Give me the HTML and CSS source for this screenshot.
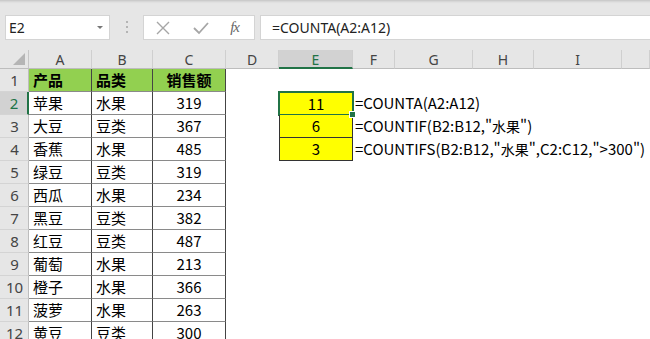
FILE: index.html
```html
<!DOCTYPE html>
<html lang="zh-CN">
<head>
    <meta charset="UTF-8">
    <title>COUNTA COUNTIF COUNTIFS</title>
    <link rel="stylesheet" href="styles.css">
</head>
<body>
    <div class="formula-bar">
        <div class="name-box">
            <span>E2</span>
            <span class="caret"></span>
        </div>
        <div class="grip">
            <span></span><span></span><span></span>
        </div>
        <div class="fx-box">
            <svg width="16" height="16" viewBox="0 0 16 16"><path d="M2 2 L14 14 M14 2 L2 14" stroke="#a6a6a6" stroke-width="1.4" fill="none"/></svg>
            <svg width="18" height="16" viewBox="0 0 18 16"><path d="M2 8 L7 13 L16 3" stroke="#a6a6a6" stroke-width="1.8" fill="none"/></svg>
            <span class="fx">fx</span>
        </div>
        <div class="formula-input">=COUNTA(A2:A12)</div>
    </div>

    <div class="sheet">
        <!-- column headers -->
        <div class="corner"><span class="corner-tri"></span></div>
        <div class="col-head">A</div>
        <div class="col-head">B</div>
        <div class="col-head">C</div>
        <div class="col-head">D</div>
        <div class="col-head col-active">E</div>
        <div class="col-head">F</div>
        <div class="col-head">G</div>
        <div class="col-head">H</div>
        <div class="col-head">I</div>
        <div class="col-head"></div>

        <!-- row 1 -->
        <div class="row-head">1</div>
        <div class="cell tbl title">产品</div>
        <div class="cell tbl title">品类</div>
        <div class="cell tbl title num">销售额</div>
        <div class="cell"></div><div class="cell"></div><div class="cell"></div>
        <div class="cell"></div><div class="cell"></div><div class="cell"></div><div class="cell"></div>

        <!-- row 2 -->
        <div class="row-head row-active">2</div>
        <div class="cell tbl">苹果</div>
        <div class="cell tbl">水果</div>
        <div class="cell tbl num">319</div>
        <div class="cell"></div>
        <div class="cell result result-top selected">11</div>
        <div class="cell formula">=COUNTA(A2:A12)</div>
        <div class="cell"></div><div class="cell"></div><div class="cell"></div><div class="cell"></div>

        <!-- row 3 -->
        <div class="row-head">3</div>
        <div class="cell tbl">大豆</div>
        <div class="cell tbl">豆类</div>
        <div class="cell tbl num">367</div>
        <div class="cell"></div>
        <div class="cell result">6</div>
        <div class="cell formula">=COUNTIF(B2:B12,"<span class="cjk">水果</span>")</div>
        <div class="cell"></div><div class="cell"></div><div class="cell"></div><div class="cell"></div>

        <!-- row 4 -->
        <div class="row-head">4</div>
        <div class="cell tbl">香蕉</div>
        <div class="cell tbl">水果</div>
        <div class="cell tbl num">485</div>
        <div class="cell"></div>
        <div class="cell result">3</div>
        <div class="cell formula">=COUNTIFS(B2:B12,"<span class="cjk">水果</span>",C2:C12,"&gt;300")</div>
        <div class="cell"></div><div class="cell"></div><div class="cell"></div><div class="cell"></div>

        <!-- row 5 -->
        <div class="row-head">5</div>
        <div class="cell tbl">绿豆</div>
        <div class="cell tbl">豆类</div>
        <div class="cell tbl num">319</div>
        <div class="cell"></div><div class="cell"></div><div class="cell"></div>
        <div class="cell"></div><div class="cell"></div><div class="cell"></div><div class="cell"></div>

        <!-- row 6 -->
        <div class="row-head">6</div>
        <div class="cell tbl">西瓜</div>
        <div class="cell tbl">水果</div>
        <div class="cell tbl num">234</div>
        <div class="cell"></div><div class="cell"></div><div class="cell"></div>
        <div class="cell"></div><div class="cell"></div><div class="cell"></div><div class="cell"></div>

        <!-- row 7 -->
        <div class="row-head">7</div>
        <div class="cell tbl">黑豆</div>
        <div class="cell tbl">豆类</div>
        <div class="cell tbl num">382</div>
        <div class="cell"></div><div class="cell"></div><div class="cell"></div>
        <div class="cell"></div><div class="cell"></div><div class="cell"></div><div class="cell"></div>

        <!-- row 8 -->
        <div class="row-head">8</div>
        <div class="cell tbl">红豆</div>
        <div class="cell tbl">豆类</div>
        <div class="cell tbl num">487</div>
        <div class="cell"></div><div class="cell"></div><div class="cell"></div>
        <div class="cell"></div><div class="cell"></div><div class="cell"></div><div class="cell"></div>

        <!-- row 9 -->
        <div class="row-head">9</div>
        <div class="cell tbl">葡萄</div>
        <div class="cell tbl">水果</div>
        <div class="cell tbl num">213</div>
        <div class="cell"></div><div class="cell"></div><div class="cell"></div>
        <div class="cell"></div><div class="cell"></div><div class="cell"></div><div class="cell"></div>

        <!-- row 10 -->
        <div class="row-head">10</div>
        <div class="cell tbl">橙子</div>
        <div class="cell tbl">水果</div>
        <div class="cell tbl num">366</div>
        <div class="cell"></div><div class="cell"></div><div class="cell"></div>
        <div class="cell"></div><div class="cell"></div><div class="cell"></div><div class="cell"></div>

        <!-- row 11 -->
        <div class="row-head">11</div>
        <div class="cell tbl">菠萝</div>
        <div class="cell tbl">水果</div>
        <div class="cell tbl num">263</div>
        <div class="cell"></div><div class="cell"></div><div class="cell"></div>
        <div class="cell"></div><div class="cell"></div><div class="cell"></div><div class="cell"></div>

        <!-- row 12 -->
        <div class="row-head">12</div>
        <div class="cell tbl">黄豆</div>
        <div class="cell tbl">豆类</div>
        <div class="cell tbl num">300</div>
        <div class="cell"></div><div class="cell"></div><div class="cell"></div>
        <div class="cell"></div><div class="cell"></div><div class="cell"></div><div class="cell"></div>
    </div>
</body>
</html>
```

FILE: styles.css
```css
body {
    margin: 0;
    padding: 0;
    background-color: #ffffff;
    font-family: "Noto Sans CJK SC", "Noto Sans", sans-serif;
    color: #000;
    overflow: hidden;
}

/* formula bar */

.formula-bar {
    display: flex;
    align-items: flex-start;
    height: 50px;
    padding: 15px 0 0 5px;
    box-sizing: border-box;
    background-color: #e6e6e6;
    box-shadow: inset 0 4px 3px -3px rgba(0, 0, 0, 0.18);
}

.name-box {
    display: flex;
    align-items: center;
    justify-content: space-between;
    width: 105px;
    height: 25px;
    box-sizing: border-box;
    padding: 0 6px 0 3px;
    background-color: #fff;
    border: 1px solid #d4d4d4;
    font-family: "Noto Sans", sans-serif;
    font-size: 14px;
    color: #222;
}

.caret {
    width: 0;
    height: 0;
    border-left: 3px solid transparent;
    border-right: 3px solid transparent;
    border-top: 3px solid #777;
}

.grip {
    display: flex;
    flex-direction: column;
    gap: 3px;
    width: 33px;
    padding-top: 6px;
    align-items: center;
}

.grip span {
    width: 2px;
    height: 2px;
    background-color: #b4b4b4;
}

.fx-box {
    display: flex;
    align-items: center;
    justify-content: space-between;
    width: 112px;
    height: 25px;
    box-sizing: border-box;
    padding: 0 15px 0 11px;
    background-color: #fff;
    border: 1px solid #d4d4d4;
    margin-right: 5px;
}

.fx {
    font-family: "Liberation Serif", serif;
    font-style: italic;
    font-size: 15px;
    color: #666;
    letter-spacing: -1px;
}

.formula-input {
    flex: 1;
    height: 25px;
    box-sizing: border-box;
    padding: 0 0 0 11px;
    background-color: #fff;
    border: 1px solid #d4d4d4;
    border-right: none;
    font-family: "Noto Sans", sans-serif;
    font-size: 14px;
    line-height: 23px;
    color: #222;
}

/* sheet grid */

.sheet {
    display: grid;
    grid-template-columns: 29px 63px 61px 73px 53px 74px 42px 78px 61px 88px 28px;
    grid-template-rows: 19px repeat(12, 23px);
}

.corner,
.col-head,
.row-head {
    background-color: #e6e6e6;
    box-sizing: border-box;
    font-family: "Noto Sans", sans-serif;
    font-size: 14px;
    color: #444;
    display: flex;
    align-items: center;
    justify-content: center;
}

.corner {
    position: relative;
    border-right: 1px solid #c6c6c6;
    border-bottom: 1px solid #bdbdbd;
}

.corner-tri {
    position: absolute;
    right: 3px;
    bottom: 3px;
    width: 0;
    height: 0;
    border-left: 12px solid transparent;
    border-bottom: 12px solid #b5b5b5;
}

.col-head {
    border-right: 1px solid #cfcfcf;
    border-bottom: 1px solid #bdbdbd;
    padding-top: 1px;
}

.col-active {
    background-color: #d2d2d2;
    border-bottom: 2px solid #217346;
    color: #217346;
}

.row-head {
    border-right: 1px solid #bdbdbd;
    border-bottom: 1px solid #d4d4d4;
    padding-left: 1px;
    font-size: 15px;
}

.row-active {
    background-color: #d2d2d2;
    border-right: 2px solid #217346;
    color: #217346;
}

.cell {
    box-sizing: border-box;
    font-size: 15px;
    line-height: 22px;
    white-space: nowrap;
    overflow: visible;
}

.tbl {
    padding-left: 4px;
    border-right: 1px solid #444;
    border-bottom: 1px solid #8a8a8a;
}

.title {
    background-color: #92d050;
    font-weight: bold;
}

.num {
    text-align: center;
    padding-left: 0;
}

.result {
    position: relative;
    background-color: #ffff00;
    text-align: center;
    border-left: 1px solid #333;
    border-right: 1px solid #333;
    border-bottom: 1px solid #333;
}

.result-top {
    border-top: 1px solid #333;
    line-height: 21px;
}

.selected {
    outline: 2px solid #217346;
    outline-offset: -1px;
}

.selected::after {
    content: "";
    position: absolute;
    right: -4px;
    bottom: -4px;
    width: 5px;
    height: 5px;
    background-color: #217346;
    border: 1px solid #fff;
    z-index: 2;
}

.formula {
    padding-left: 2px;
}

.cjk {
    font-size: 14px;
}
```
